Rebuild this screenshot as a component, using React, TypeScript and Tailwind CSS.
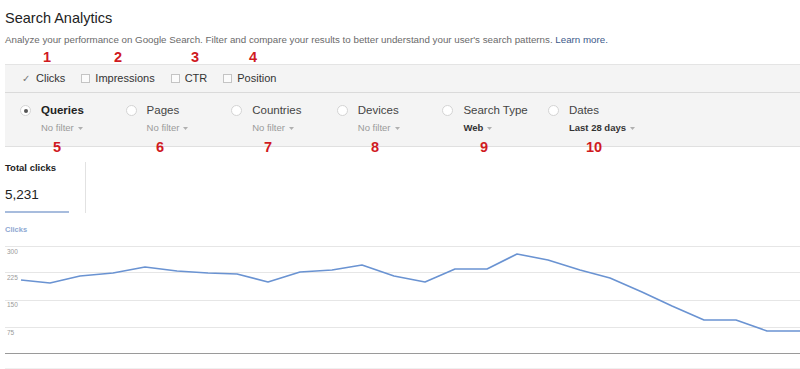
import React from "react";

const pts: [number, number][] = [
  [21, 40], [50, 43], [80, 36], [113, 33], [145, 27], [177, 31], [208, 33], [237, 34],
  [268, 42], [300, 32], [332, 30], [362, 25], [394, 36], [425, 42], [455, 29], [487, 29],
  [517, 14], [548, 20], [580, 30], [610, 38], [642, 52], [672, 66], [704, 80], [736, 80],
  [767, 91], [800, 91],
];

function Caret() {
  return (
    <svg width="5" height="3" viewBox="0 0 5 3" className="ml-[4px] inline-block">
      <path d="M0 0 L5 0 L2.5 3 Z" fill="#b0b0b0" />
    </svg>
  );
}

function Radio({ checked }: { checked?: boolean }) {
  return (
    <div className="w-[11px] h-[11px] shrink-0 rounded-full border border-[#d4d4d4] bg-white flex items-center justify-center mt-[2px]">
      {checked && <div className="w-[4px] h-[4px] rounded-full bg-[#555]" />}
    </div>
  );
}

function Box() {
  return <div className="w-[9px] h-[9px] border border-[#c4c4c4] bg-[#fbfbfb]" />;
}

const cols = [
  { label: "Queries", sub: "No filter", checked: true, bold: true, subBold: false },
  { label: "Pages", sub: "No filter" },
  { label: "Countries", sub: "No filter" },
  { label: "Devices", sub: "No filter" },
  { label: "Search Type", sub: "Web", subBold: true },
  { label: "Dates", sub: "Last 28 days", subBold: true },
];

const nums: { n: string; x: number; y: number }[] = [
  { n: "1", x: 47, y: 57 },
  { n: "2", x: 118, y: 57 },
  { n: "3", x: 195, y: 57 },
  { n: "4", x: 253, y: 57 },
  { n: "5", x: 57, y: 147 },
  { n: "6", x: 160, y: 147 },
  { n: "7", x: 268, y: 147 },
  { n: "8", x: 375, y: 147 },
  { n: "9", x: 484, y: 147 },
  { n: "10", x: 594, y: 147 },
];

export default function App() {
  return (
    <div className="relative w-[800px] h-[369px] overflow-hidden bg-white font-['Liberation_Sans',Arial,sans-serif]">
      {/* header */}
      <div className="h-[64px] pl-[5px] pt-[10px]">
        <h1 className="text-[14.5px] leading-[17px] text-[#222]">Search Analytics</h1>
        <p className="mt-[7px] text-[9.75px] leading-[12px] text-[#6a6a6a] whitespace-nowrap">
          Analyze your performance on Google Search. Filter and compare your results to better understand your user's search patterns.{" "}
          <span className="text-[#3d5a8a]">Learn more.</span>
        </p>
      </div>

      {/* metrics bar */}
      <div className="ml-[5px] h-[29px] border-t border-b border-t-[#e4e4e4] border-b-[#dadada] bg-[#f4f4f4] flex items-center pl-[17px] gap-[16px] text-[11px] text-[#333]">
        <div className="flex items-center gap-[6px]">
          <span className="text-[#777] text-[10px]">✓</span>
          <span>Clicks</span>
        </div>
        <div className="flex items-center gap-[5px]">
          <Box />
          <span>Impressions</span>
        </div>
        <div className="flex items-center gap-[5px]">
          <Box />
          <span>CTR</span>
        </div>
        <div className="flex items-center gap-[5px]">
          <Box />
          <span>Position</span>
        </div>
      </div>

      {/* dimensions bar */}
      <div className="ml-[5px] h-[54px] border-b border-[#e0e0e0] bg-[#f4f4f4] flex pl-[15px] pt-[10px]">
        {cols.map((c) => (
          <div key={c.label} className="w-[105.6px] shrink-0 flex gap-[10px]">
            <Radio checked={c.checked} />
            <div className="flex flex-col">
              <span className={`text-[11.5px] leading-[14px] ${c.bold ? "font-bold text-[#222]" : "text-[#444]"}`}>
                {c.label}
              </span>
              <span
                className={`mt-[5px] flex items-center whitespace-nowrap text-[9.5px] leading-[12px] ${
                  c.subBold ? "font-bold text-[#333]" : "text-[#9a9a9a]"
                }`}
              >
                {c.sub}
                <Caret />
              </span>
            </div>
          </div>
        ))}
      </div>

      {/* summary */}
      <div className="flex pl-[5px] pt-[15px] h-[78px]">
        <div className="w-[64px] flex flex-col">
          <span className="text-[9.5px] leading-[12px] font-bold text-[#222]">Total clicks</span>
          <span className="mt-[13px] text-[13.5px] leading-[16px] text-[#222]">5,231</span>
          <div className="mt-[8px] h-[2px] w-[64px] bg-[#a7bcdd]" />
        </div>
        <div className="ml-[16px] w-px h-[51px] bg-[#e2e2e2]" />
      </div>

      {/* chart */}
      <div className="pl-[5px] h-[15px]">
        <span className="block text-[7.5px] leading-[9px] font-bold text-[#8ea8d2]">Clicks</span>
      </div>
      <svg width="800" height="129" viewBox="0 0 800 129" className="block">
        {[6, 32, 60, 87].map((y) => (
          <line key={y} x1="5" x2="800" y1={y + 0.5} y2={y + 0.5} stroke="#e6e6e6" strokeWidth="1" />
        ))}
        <line x1="5" x2="800" y1="113.5" y2="113.5" stroke="#9a9a9a" strokeWidth="1" />
        <line x1="5" x2="800" y1="128.5" y2="128.5" stroke="#f0f0f0" strokeWidth="1" />
        {[
          ["300", 14],
          ["225", 40],
          ["150", 67],
          ["75", 95],
        ].map(([t, y]) => (
          <text key={t as string} x="7" y={y as number} fontSize="6.5" fill="#9a9a9a" fontFamily="Liberation Sans, Arial, sans-serif">
            {t}
          </text>
        ))}
        <polyline
          points={pts.map(([x, y]) => `${x},${y}`).join(" ")}
          fill="none"
          stroke="#6a93d2"
          strokeWidth="1.6"
          strokeLinejoin="round"
        />
      </svg>

      {/* annotation numbers */}
      {nums.map((n) => (
        <span
          key={n.n}
          className="absolute -translate-x-1/2 -translate-y-1/2 text-[14.5px] leading-[15px] font-bold text-[#d01a1f]"
          style={{ left: n.x, top: n.y }}
        >
          {n.n}
        </span>
      ))}
    </div>
  );
}
